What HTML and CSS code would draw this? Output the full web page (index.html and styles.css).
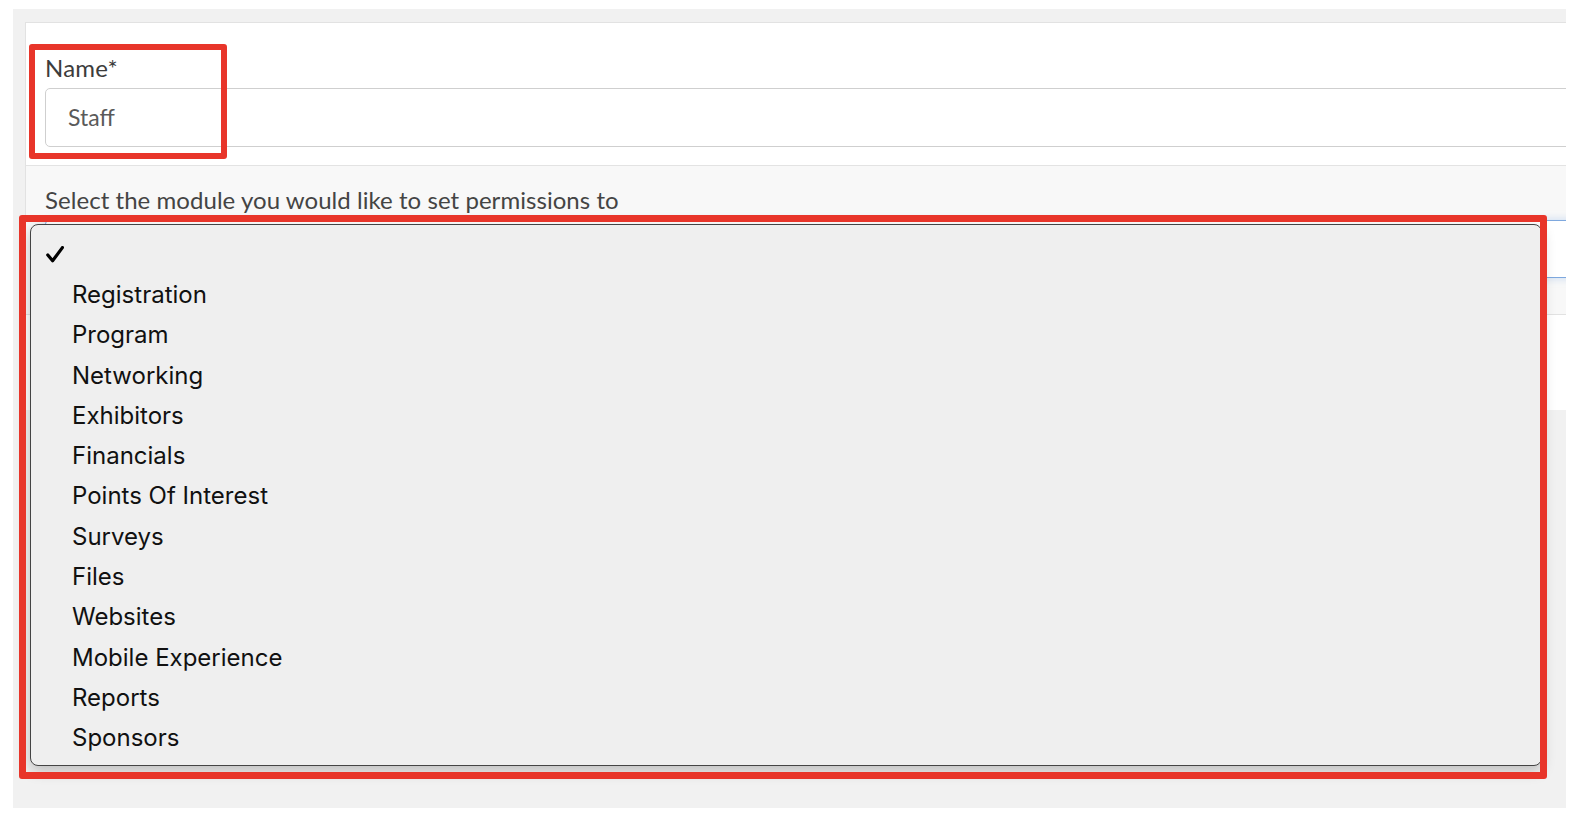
FILE: index.html
```html
<!DOCTYPE html>
<html lang="en">
<head>
<meta charset="utf-8">
<title>Role permissions</title>
<link rel="stylesheet" href="styles.css">
</head>
<body>
<div class="page">
  <div class="frame">
    <div class="card">
      <div class="card-top">
        <label class="field-label" for="name">Name*</label>
        <div class="text-input" id="name">Staff</div>
      </div>
      <div class="card-perm">
        <p class="perm-hint">Select the module you would like to set permissions to</p>
        <div class="module-select"></div>
      </div>
      <div class="card-body"></div>
    </div>
  </div>

  <div class="dropdown">
    <ul class="options">
      <li class="option selected"><svg class="check" width="18" height="17" viewBox="0 0 18 17"><path d="M1.8 9 L6.6 14.8 L16.4 1.6" fill="none" stroke="#000" stroke-width="3.2" stroke-linecap="round" stroke-linejoin="round"/></svg></li>
      <li class="option">Registration</li>
      <li class="option">Program</li>
      <li class="option">Networking</li>
      <li class="option">Exhibitors</li>
      <li class="option">Financials</li>
      <li class="option">Points Of Interest</li>
      <li class="option">Surveys</li>
      <li class="option">Files</li>
      <li class="option">Websites</li>
      <li class="option">Mobile Experience</li>
      <li class="option">Reports</li>
      <li class="option">Sponsors</li>
    </ul>
  </div>

  <div class="mark mark-name"></div>
  <div class="mark mark-list"></div>
</div>
</body>
</html>
```

FILE: styles.css
```css
* { box-sizing: border-box; }

html, body {
  margin: 0;
  padding: 0;
  background: #ffffff;
}

.page {
  position: relative;
  width: 1580px;
  height: 832px;
  overflow: hidden;
}

.frame {
  margin: 9px 0 0 13px;
  width: 1553px;
  height: 799px;
  background: #f1f1f1;
  padding: 13px 0 0 12px;
  overflow: hidden;
}

.card {
  background: #ffffff;
  border-top: 1px solid #e2e2e2;
  border-left: 1px solid #e2e2e2;
  height: 388px;
  display: flex;
  flex-direction: column;
  font-family: Lato, "Open Sans", sans-serif;
  color: #3a3a3a;
}

.card-top {
  height: 143px;
  padding: 31px 0 0 19px;
  border-bottom: 1px solid #e3e3e3;
}

.field-label {
  display: block;
  font-size: 24px;
  line-height: 28px;
  color: #3c3c3c;
  letter-spacing: 0.2px;
}

.text-input {
  margin-top: 6px;
  height: 59px;
  margin-right: -20px;
  border: 1.5px solid #cfcfcf;
  border-radius: 5px;
  padding: 0 0 2px 22px;
  display: flex;
  align-items: center;
  font-size: 23px;
  color: #5a5a5a;
  background: #fff;
}

.card-perm {
  background: #f8f8f8;
  height: 149px;
  padding: 20px 0 0 19px;
  border-bottom: 1px solid #e2e2e2;
}

.perm-hint {
  margin: 0;
  font-size: 24px;
  line-height: 28px;
  color: #444;
  letter-spacing: 0.05px;
}

.module-select {
  margin-top: 6px;
  height: 58px;
  margin-right: -20px;
  border: 1px solid #7ea8de;
  border-radius: 4px;
  background: #fff;
  box-shadow: 0 0 8px rgba(102, 160, 225, 0.35);
}

.card-body {
  flex: 1;
  background: #ffffff;
}

/* Native-style popup list over the form */
.dropdown {
  position: absolute;
  left: 30px;
  top: 224px;
  width: 1512px;
  height: 542px;
  background: #efefef;
  border: 1.5px solid #444;
  border-radius: 8px;
  box-shadow: 0 5px 14px rgba(0, 0, 0, 0.22);
  padding: 9px 0 0 0;
}

.options {
  list-style: none;
  margin: 0;
  padding: 0;
}

.option {
  height: 40.3px;
  display: flex;
  align-items: center;
  padding-left: 41px;
  font-family: Inter, "Liberation Sans", sans-serif;
  font-size: 24px;
  color: #111;
}

.option.selected {
  padding-left: 15px;
}

.check { display: block; }

/* Red annotation boxes */
.mark {
  position: absolute;
  border: 6.5px solid #e8352a;
  border-radius: 3px;
}

.mark-name {
  left: 29px;
  top: 44px;
  width: 198px;
  height: 115px;
}

.mark-list {
  left: 19px;
  top: 215px;
  width: 1528px;
  height: 564px;
  border-width: 7px;
}
```
